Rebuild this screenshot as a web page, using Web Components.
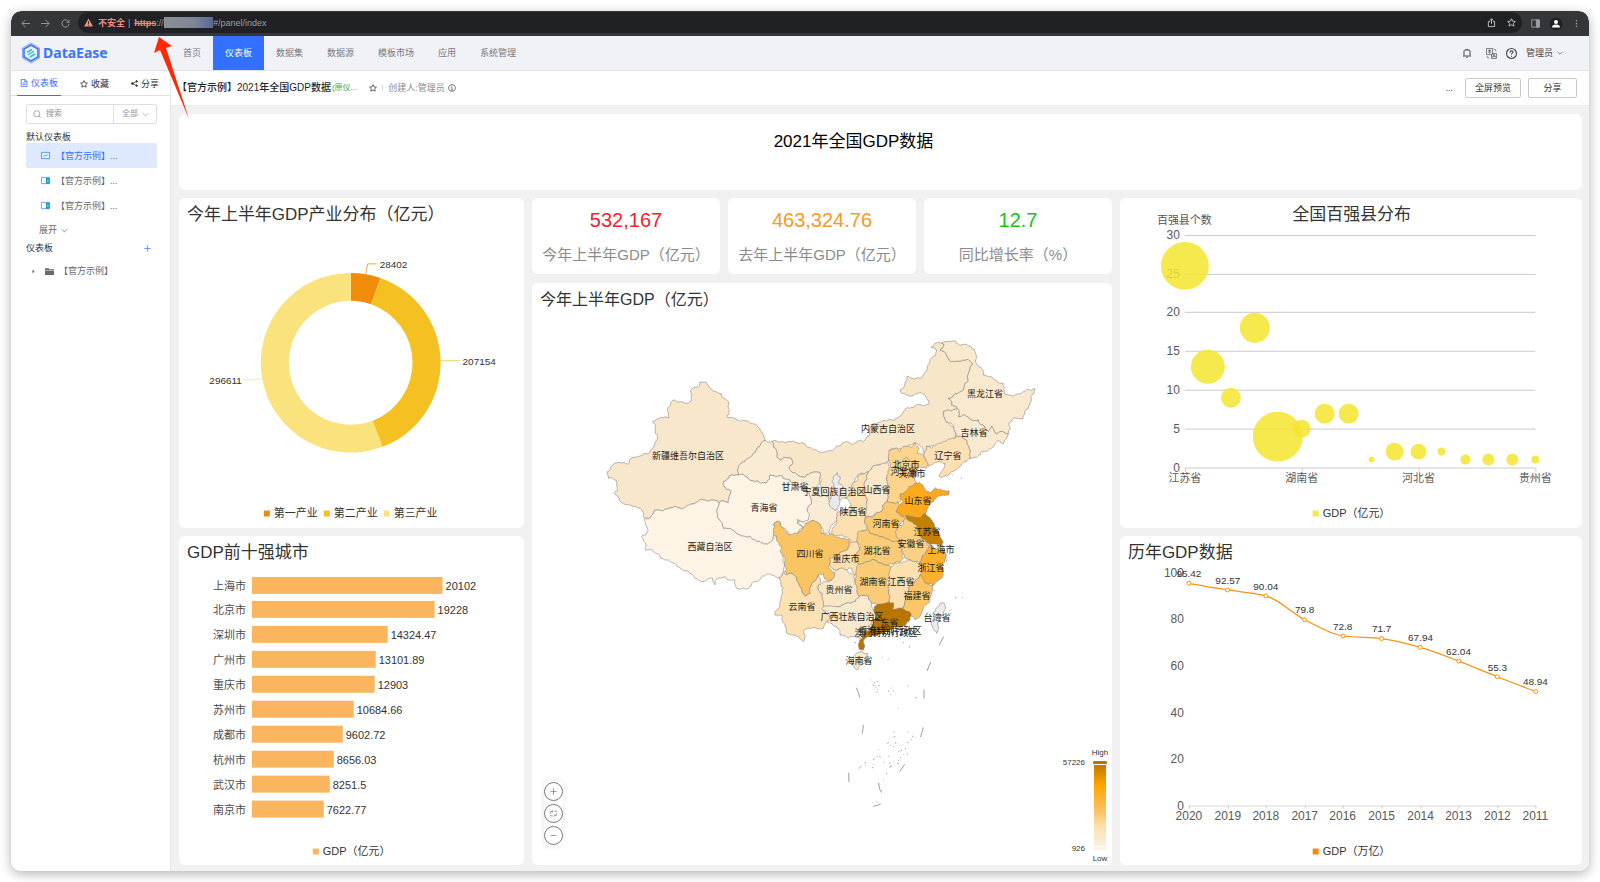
<!DOCTYPE html>
<html lang="zh-CN">
<head>
<meta charset="utf-8">
<title>DataEase</title>
<style>
  html, body { margin: 0; min-height: 100%; background: #fff; }
  body { font-family: "Liberation Sans", "Noto Sans CJK SC", sans-serif; font-size: 9px; line-height: 12px; color: #333; }
</style>
</head>
<body>
<de-window></de-window>

<script>
const SVG_TEXT = 'text{font-family:"Liberation Sans","Noto Sans CJK SC",sans-serif}';

class Base extends HTMLElement {
  connectedCallback() {
    if (this.shadowRoot) return;
    this.attachShadow({ mode: 'open' }).innerHTML =
      `<style>*{box-sizing:border-box} a{color:inherit;text-decoration:none} button,input,select{font:inherit;color:inherit;margin:0;padding:0;border:0;background:none;outline:0} svg{display:block;flex:none}${this.css()}</style>${this.html()}`;
  }
  css() { return ':host{display:block}'; }
  html() { return '<slot></slot>'; }
}
const R = Math.round;
/* vertically centred svg label */
const label = (x, y, s, size, anchor = 'start', fill = '#333') =>
  `<text x="${R(x)}" y="${R(y + size * 0.36)}" font-size="${size}" text-anchor="${anchor}" fill="${fill}">${s}</text>`;

const ICONS = {
  back: '<path d="M10 5H1M5 1L1 5l4 4"/>',
  forward: '<path d="M0 5h9M5 1l4 4-4 4"/>',
  reload: '<path d="M8.500 3A4 4 0 1 0 9 5.500M9 1v2.800H6.200"/>',
  share: '<path d="M3.500 4H1.500v5.500h7V4h-2M5 6.500V1M3 2.800L5 .8l2 2"/>',
  star: '<path d="M5 .8l1.300 2.800 3 .35-2.200 2.050.6 3L5 7.500 2.300 9l.6-3L.7 3.950l3-.35z"/>',
  panel: '<path d="M.8 1h8.400v8H.8z"/><path d="M6 1h3v8H6z" fill="currentColor"/>',
  more: '<path d="M5 1v1.400M5 4.300v1.400M5 7.600V9" stroke-width="1.500"/>',
  bell: '<path d="M2 7.500V3Q2 2 3 2h4q1 0 1 1v4.500M1 8h8M4.200 9.300h1.600M5 .8V2"/>',
  lang: '<g stroke-width=".6"><path d="M.5.5h5.500v5.500H.5zM1.700 2.200h3.200M1.700 3.800h3.200M3.300 1.500v3.500M5 6v3.500h4.500V5H6M5.800 8.600l1.500-3 1.500 3M6.300 7.600h2M7 .8q2 .2 2 2.200M.8 7.200q.2 2 2.200 2"/></g>',
  help: '<circle cx="5" cy="5" r="4.500"/><path d="M3.600 4Q3.600 2.600 5 2.600T6.400 3.900Q6.400 4.600 5 5.300v.7M5 7v1"/>',
  down: '<path d="M1 3l4 4 4-4"/>',
  doc: '<path d="M1.500.7h5L8.700 3v6.300H1.500zM6 .8v2.600h2.600M3.200 5h3.600M3.200 7h3.600"/>',
  nodes: '<circle cx="2" cy="5" r="1.400" fill="currentColor"/><circle cx="8" cy="2" r="1.200" fill="currentColor"/><circle cx="8" cy="8" r="1.200" fill="currentColor"/><path d="M8 2L2 5l6 3"/>',
  search: '<circle cx="4.700" cy="4.700" r="3.800"/><path d="M7.500 7.500L9.500 9.500"/>',
  info: '<circle cx="5" cy="5" r="4.300"/><path d="M5 4.300V7.500M4 4.500h1M4 7.500h2M5 2.300v1"/>',
  plus: '<path d="M5 .5v9M.5 5h9"/>',
  minus: '<path d="M1 5h8"/>',
  sync: '<path d="M1 5.500V2h3M9 4.500V8H6M6 1.500h3v1.500M4 8.500H1V7M3 .8L4.300 2 3 3.200M7 6.800L5.700 8 7 9.200"/>',
  caret: '<path d="M3 1l4 4-4 4z" fill="currentColor" stroke="none"/>',
  folder: '<path d="M0 1.500h4l1 1h5V4H0zM0 4.500h10V9H0z" fill="currentColor" stroke="none"/>',
  chart: '<path d="M.5 1.500h9v7h-9z" fill="#e8f1ff" stroke="#4f8ff7"/><path d="M2.300 6.500l2-2 1.500 1 2-2" stroke="#27c3c9"/>',
  board: '<path d="M.5 1.500h9v7h-9z" fill="#fff" stroke="#5aa2ee"/><path d="M5.500 2H9.500v6.500h-4z" fill="#1d8fe0" stroke="none"/><path d="M6.500 3.500h2v3.500h-2z" fill="#25e0c5" stroke="none"/>',
  warn: '<path d="M5 .5L10 9.500H0z" fill="currentColor" stroke="none"/><path d="M5 3.500v3M5 7.400v1" stroke="#202124"/>',
  user: '<circle cx="5" cy="5" r="6.500" fill="#202124" stroke="none"/><circle cx="5" cy="3" r="2" fill="#fff" stroke="none"/><path d="M1 8.500Q1 5.500 5 5.500T9 8.500z" fill="#fff" stroke="none"/>'
};
class Icon extends Base {
  css() { const s = this.getAttribute('size') || 8; return `:host{display:block;flex:none;width:${s}px;height:${s}px} svg{overflow:visible}`; }
  html() { return `<svg viewBox="0 0 10 10" width="100%" height="100%" fill="none" stroke="currentColor" stroke-width="1">${ICONS[this.getAttribute('name')]}</svg>`; }
}
customElements.define('de-icon', Icon);

class BrowserBar extends Base {
  css() { return `
    :host{display:flex;align-items:center;height:25px;background:#35363a;color:#9aa0a6;border-radius:10px 10px 0 0;padding:0 8px 0 10px}
    .nav{display:flex;gap:11px;width:57px;align-items:center}
    .url{flex:1;display:flex;align-items:center;height:21px;margin-bottom:2px;border-radius:10px;background:#202124;padding:0 6px}
    .danger{color:#f28b82} .b{font-weight:bold;margin:0 3px 0 5px}
    s{color:#f28b82;font-weight:bold;margin-left:4px}
    .mask{width:49px;height:11px;background:linear-gradient(90deg,#8d8f93,#7f8596 60%,#5b6794)}
    .end{margin-left:auto;display:flex;gap:11px;color:#c4c7cb}
    .tools{display:flex;gap:11px;align-items:center;margin-left:9px;color:#9aa0a6}`; }
  html() { return `
    <div class="nav"><de-icon name="back" size="9"></de-icon><de-icon name="forward" size="9"></de-icon><de-icon name="reload" size="9"></de-icon></div>
    <div class="url"><de-icon name="warn" size="9" class="danger"></de-icon><span class="danger b">不安全</span>|<s>https</s><span>://</span><span class="mask"></span><span>#/panel/index</span>
      <div class="end"><de-icon name="share" size="9"></de-icon><de-icon name="star" size="9"></de-icon></div></div>
    <div class="tools"><de-icon name="panel" size="9"></de-icon><de-icon name="user" size="10"></de-icon><de-icon name="more" size="9"></de-icon></div>`; }
}
customElements.define('de-browser-bar', BrowserBar);

class Header extends Base {
  css() { return `
    :host{display:flex;height:35px;background:#f1f2f7;border-bottom:1px solid #e2e3e8;color:#77797f}
    .logo{display:flex;align-items:center;gap:2px;width:160px;padding-left:10px;color:#3d73fb;font:bold 14px/20px "Noto Sans","Liberation Sans",sans-serif}
    nav{display:flex} nav a{display:flex;align-items:center;padding:0 12px}
    nav a.on{background:#3370ff;color:#fff}
    .right{margin-left:auto;display:flex;align-items:center;gap:9px;padding-right:21px;color:#45474c}
    .right de-icon:first-child{margin-right:5px}
    .right a{display:flex;align-items:center;gap:4px}`; }
  html() { return `
    <a class="logo" href="#"><svg width="20" height="22" viewBox="0 0 20 22" fill="none" stroke="#3d73fb"><path d="M10 1L18.500 6v10L10 21 1.500 16V6z" stroke-width="1" opacity=".6"/><path d="M10 3l7 4v8l-7 4-7-4V7z" stroke-width="1.600"/><path d="M6 10.500l5-3M7 13l6-4M9 15l5-3" stroke="#23c4e8" stroke-width="1.500"/></svg>DataEase</a>
    <nav>${['首页', '仪表板', '数据集', '数据源', '模板市场', '应用', '系统管理'].map((t, i) => `<a href="#"${i === 1 ? ' class="on"' : ''}>${t}</a>`).join('')}</nav>
    <div class="right"><de-icon name="bell" size="10"></de-icon><de-icon name="lang" size="11"></de-icon><de-icon name="help" size="11"></de-icon><a href="#">管理员<de-icon name="down" size="6"></de-icon></a></div>`; }
}
customElements.define('de-header', Header);

class Sidebar extends Base {
  css() { return `
    :host{display:block;width:160px;flex:none;background:#fff;border-right:1px solid #e6e6e6}
    .tabs{display:flex;height:25px;border-bottom:1px solid #dfe1e6;padding:0 8px 0 6px;justify-content:space-between}
    .tabs button{display:flex;align-items:center;gap:3px;padding:0 3px;height:25px}
    .tabs .on{color:#3370ff;border-bottom:1px solid #3370ff}
    .body{padding:8px 13px 0 15px}
    .find{display:flex;height:20px;border:1px solid #dcdfe6;border-radius:2px;color:#8f9399;font-size:8px;align-items:center}
    .find de-icon{margin-left:6px} .find input{flex:1;min-width:0;margin-left:5px}.find input::placeholder{color:#8f9399}
    .pick{display:flex;align-items:center;border-left:1px solid #dcdfe6;height:18px;width:43px}
    .pick select{appearance:none;width:22px;margin-left:8px} .pick de-icon{margin:0 0 0 -2px}
    h3{margin:0;font-size:9px;font-weight:normal;line-height:12px;color:#333;display:flex;justify-content:space-between;align-items:center}
    h3.first{margin-top:7px} h3 button{color:#3370ff;padding-right:6px}
    .item{display:flex;align-items:center;height:25px;padding-left:15px;gap:6px;border-radius:2px;color:#66686d}
    .item.on{background:#dfe9fd;color:#3370ff}
    .more{display:flex;align-items:center;gap:4px;padding-left:13px;height:24px;color:#66686d}
    .tree{display:flex;align-items:center;gap:9px;padding-left:5px;margin-top:11px;color:#66686d}.tree a{margin-left:-4px}`; }
  html() { return `
    <div class="tabs"><button class="on"><de-icon name="doc"></de-icon>仪表板</button><button><de-icon name="star"></de-icon>收藏</button><button><de-icon name="nodes" size="7"></de-icon>分享</button></div>
    <div class="body">
      <div class="find"><de-icon name="search" size="8"></de-icon><input placeholder="搜索" aria-label="搜索"><div class="pick"><select aria-label="类型"><option>全部</option></select><de-icon name="down" size="7"></de-icon></div></div>
      <h3 class="first">默认仪表板</h3>
      <a class="item on" href="#"><de-icon name="chart" size="9"></de-icon>【官方示例】...</a>
      <a class="item" href="#"><de-icon name="board" size="9"></de-icon>【官方示例】...</a>
      <a class="item" href="#"><de-icon name="board" size="9"></de-icon>【官方示例】...</a>
      <a class="more" href="#">展开<de-icon name="down" size="7"></de-icon></a>
      <h3>仪表板<button aria-label="新建"><de-icon name="plus" size="7"></de-icon></button></h3>
      <div class="tree"><de-icon name="caret" size="5"></de-icon><de-icon name="folder" size="9"></de-icon><a href="#">【官方示例】</a></div>
    </div>`; }
}
customElements.define('de-sidebar', Sidebar);

class Toolbar extends Base {
  css() { return `
    :host{display:flex;align-items:center;height:35px;background:#fff;padding:0 12px 0 6px;border-bottom:1px solid #ececec;color:#8a8c91}
    h1{margin:0;font-size:10px;line-height:14px;font-weight:500;color:#1f2329}
    .g{color:#4ca24c;font-size:8px;margin:0 12px 0 1px} .st{color:#444}
    i{width:1px;height:8px;background:#ddd;margin:0 5px}
    .info{margin-left:3px;color:#555}
    .r{margin-left:auto;display:flex;align-items:center;gap:7px;color:#333}
    .r button{height:20px;border:1px solid #c8cacf;border-radius:2px;padding:0 9px;min-width:49px}
    .r .dots{border:0;min-width:0;padding:0 5px}`; }
  html() { return `<h1>【官方示例】2021年全国GDP数据</h1><span class="g">(原仪...</span><de-icon class="st" name="star"></de-icon><i></i><span>创建人:管理员</span><de-icon class="info" name="info"></de-icon>
    <div class="r"><button class="dots" aria-label="更多">...</button><button>全屏预览</button><button>分享</button></div>`; }
}
customElements.define('de-toolbar', Toolbar);

class Card extends Base {
  css() { return `:host{display:block;background:#fff;border-radius:6px;min-width:0;min-height:0;overflow:hidden}`; }
}
customElements.define('de-card', Card);

class Kpi extends Base {
  css() { return `:host{display:flex;flex-direction:column;align-items:center;height:76px;padding-top:10px;gap:12px;background:#fff;border-radius:6px;white-space:nowrap}
    b{font-weight:normal;font-size:20px;line-height:24px;color:${this.getAttribute('color')}} span{font-size:15px;line-height:22px;color:#8b8b8b}`; }
  html() { return `<b>${this.getAttribute('value')}</b><span><slot></slot></span>`; }
}
customElements.define('de-kpi', Kpi);

/* shared frame for every svg chart */
class Chart extends Base {
  size = [344, 330];
  css() { return `:host{display:block;height:100%;position:relative} svg{width:100%;height:100%} ${SVG_TEXT}`; }
  html() { return `<svg viewBox="0 0 ${this.size.join(' ')}" preserveAspectRatio="xMinYMid meet">${this.draw()}</svg>`; }
  title(s) { return label(8, 16, s, 17); }
  legend(x, color, s) { return `<rect x="${x}" y="313" width="6" height="6" fill="${color}"/>` + label(x + 10, 316, s, 11); }
}

class Donut extends Chart {
  draw() {
    const data = [[28402, '#f18b0a', '第一产业'], [207154, '#f5c022', '第二产业'], [296611, '#fae27c', '第三产业']];
    const sum = data.reduce((a, d) => a + d[0], 0), cx = 172, cy = 165, ro = 90, ri = 62;
    const p = (r, a) => `${(cx + r * Math.sin(a)).toFixed(1)} ${(cy - r * Math.cos(a)).toFixed(1)}`;
    let a = 0, out = this.title('今年上半年GDP产业分布（亿元）');
    data.forEach(([v, c, n], i) => {
      const b = a + v / sum * Math.PI * 2, big = b - a > Math.PI ? 1 : 0;
      out += `<path d="M${p(ro, a)}A${ro} ${ro} 0 ${big} 1 ${p(ro, b)}L${p(ri, b)}A${ri} ${ri} 0 ${big} 0 ${p(ri, a)}z" fill="${c}"/>` + this.legend(85 + i * 60, c, n);
      a = b;
    });
    return out + '<g fill="none"><path d="M187 76l2-10h9" stroke="#f5a742"/><path d="M262 163h19" stroke="#f5cd55"/><path d="M82 181l-6 1H65" stroke="#fae79a"/></g>'
      + label(201, 66, '28402', 10) + label(284, 163, '207154', 10) + label(63, 182, '296611', 10, 'end');
  }
}
customElements.define('de-donut', Donut);

class Bars extends Chart {
  draw() {
    const d = [['上海市', 20102], ['北京市', 19228], ['深圳市', 14324.47], ['广州市', 13101.89], ['重庆市', 12903], ['苏州市', 10684.66], ['成都市', 9602.72], ['杭州市', 8656.03], ['武汉市', 8251.5], ['南京市', 7622.77]];
    return this.title('GDP前十强城市') + d.map(([n, v], i) => {
      const y = R(40.5 + i * 24.9), w = R(v / 20102 * 191);
      return label(67, y + 9, n, 11, 'end', '#4a4a4a') + `<rect x="73" y="${y}" width="${w}" height="17" fill="#fab55e"/>` + label(76 + w, y + 9, v, 11);
    }).join('') + this.legend(134, '#fab55e', 'GDP（亿元）');
  }
}
customElements.define('de-bars', Bars);

class Bubbles extends Chart {
  size = [462, 330];
  draw() {
    const Y = v => R(270 - v * 7.777), X = i => R(64.5 + i * 23.44);
    const b = [[26, 24], [13, 17], [9, 10], [18, 15], [4, 25], [5, 9], [7, 10], [7, 10], [1, 3], [2, 9], [2, 8], [2, 4], [1, 5], [1, 6], [1, 6], [1, 4]];
    let out = label(232, 16, '全国百强县分布', 17, 'middle') + label(37, 22, '百强县个数', 11, 'start', '#555');
    for (let v = 0; v <= 30; v += 5) out += `<path d="M65 ${Y(v)}.5H416" stroke="#cbcbcb"/>` + label(60, Y(v), v, 12, 'end', '#595959');
    ['江苏省', '湖南省', '河北省', '贵州省'].forEach((n, i) => out += `<path d="M${X(i * 5)}.5 270v4" stroke="#ccc"/>` + label(X(i * 5), 280, n, 11, 'middle', '#595959'));
    return out + b.map(([v, r], i) => `<circle cx="${X(i)}" cy="${Y(v)}" r="${r}" fill="#f4e52e" opacity=".85"/>`).join('') + this.legend(193, '#f6e94f', 'GDP（亿元）');
  }
}
customElements.define('de-bubbles', Bubbles);

class Line extends Chart {
  size = [462, 330];
  draw() {
    const v = [95.42, 92.57, 90.04, 79.8, 72.8, 71.7, 67.94, 62.04, 55.3, 48.94], st = 38.6;
    const P = v.map((n, i) => [69 + i * st, 270 - n * 2.333]), n = P.length;
    /* monotone cubic tangents */
    const s = P.slice(1).map((p, i) => (p[1] - P[i][1]) / st);
    const t = P.map((_, i) => i === 0 ? s[0] : i === n - 1 ? s[n - 2] : 2 * s[i - 1] * s[i] / (s[i - 1] + s[i]));
    let d = `M${P[0]}`;
    for (let i = 1; i < n; i++) d += `C${P[i - 1][0] + st / 3} ${P[i - 1][1] + t[i - 1] * st / 3} ${P[i][0] - st / 3} ${P[i][1] - t[i] * st / 3} ${P[i]}`;
    let out = this.title('历年GDP数据') + '<path d="M69 270.500H417" stroke="#d9d9d9"/>';
    for (let k = 0; k <= 100; k += 20) out += label(64, 269.5 - k * 2.333, k, 12, 'end', '#595959');
    out += `<path d="${d}" fill="none" stroke="#f6930f" stroke-width="1.200"/>`;
    P.forEach((p, i) => out += `<path d="M${R(p[0])}.5 270v3" stroke="#ccc"/><circle cx="${p[0]}" cy="${p[1]}" r="2" fill="#fff" stroke="#f6930f"/>` + label(p[0], p[1] - 10, v[i], 10, 'middle') + label(p[0], 280, 2020 - i, 12, 'middle', '#595959'));
    return out + this.legend(193, '#f18b0a', 'GDP（万亿）');
  }
}
customElements.define('de-line', Line);

/* Province outlines: [fill, x offset, points] */
const REGIONS = [
  ['#f7e6c8', 0, '547,364 570,366 620,368 650,380 680,390 710,394 740,378 790,372 820,365 840,345 850,310 890,303 930,288 948,265 990,255 1018,252 1010,235 980,220 935,220 930,210 952,168 990,175 1008,155 1012,140 1038,105 1040,90 1023,82 1035,70 1062,75 1050,90 1070,105 1082,125 1115,122 1130,118 1148,130 1140,150 1135,180 1120,210 1075,235 1085,255 1102,265 1060,275 1068,305 1090,320 1098,350 1050,380 1010,378 1002,400 980,370 940,385 905,385 895,425 860,435 835,455 810,460 790,495 785,528 750,540 725,535 700,530 690,490 690,458 660,460 645,472 620,462 597,445 608,430 605,416 570,420 560,395'],
  ['#f8e7cb', 0, '330,185 348,186 355,200 375,215 395,222 410,240 416,265 412,293 440,300 465,302 490,312 508,325 527,362 510,378 490,400 470,418 455,428 445,465 400,485 420,510 415,548 388,548 360,541 320,547 300,556 275,568 240,563 220,572 195,570 180,594 163,594 150,565 120,555 105,553 88,535 72,520 82,512 76,480 55,475 52,455 65,438 90,428 115,432 122,415 150,408 190,382 203,350 195,330 197,315 187,305 215,292 238,293 235,285 250,240 270,245 302,243 305,208 325,200'],
  ['#faecd4', 0, '527,362 547,364 560,395 570,420 605,416 608,430 597,445 620,462 645,472 660,460 690,458 688,480 675,505 690,530 715,530 722,560 745,572 742,600 730,610 720,642 700,640 690,615 665,602 650,615 625,600 620,610 645,625 630,640 615,645 600,640 652,575 665,545 650,510 625,500 600,480 575,468 540,465 530,488 500,483 470,470 445,465 455,428 470,418 490,400 510,378'],
  ['#fdf4e5', 0, '163,597 180,594 195,570 220,572 240,563 275,568 320,547 360,541 388,548 385,560 388,600 400,625 440,640 480,648 510,665 540,668 552,645 565,655 578,685 583,740 568,775 545,765 515,770 490,785 475,805 440,805 435,780 405,770 378,778 375,795 368,775 315,775 300,760 260,738 235,720 212,715 190,695 165,688 155,650 168,645 172,625'],
  ['#fdf4e5', 0, '400,485 445,465 470,470 500,483 530,488 540,465 575,468 600,480 625,500 650,510 665,545 652,575 655,600 640,605 622,598 622,610 645,625 630,628 615,645 598,645 575,620 562,604 550,612 552,645 540,668 510,665 480,648 440,640 400,625 388,600 385,560 388,548 415,548 420,510'],
  ['#f8e9cf', 690, '360,90 372,75 365,70 405,63 430,73 450,78 468,105 478,140 490,165 520,175 550,190 555,222 580,228 610,215 625,208 645,206 632,230 628,255 608,298 575,300 567,310 565,342 540,335 530,342 515,318 505,335 495,320 475,300 455,300 435,285 415,290 412,265 395,255 385,235 430,210 445,180 450,150 458,130 440,118 425,122 392,125 380,105'],
  ['#f9e9cf', 690, '370,275 412,265 415,290 435,285 455,300 475,300 495,320 505,335 515,318 530,342 540,335 565,342 560,355 550,372 535,362 520,380 500,395 485,395 475,408 450,415 448,385 440,360 408,350 402,320 378,305'],
  ['#fde0b4', 690, '320,378 335,385 355,370 380,362 408,350 440,360 448,385 450,415 425,432 395,455 362,472 358,465 375,430 358,425 340,432 325,440 318,420 312,400'],
  ['#fee2b4', 0, '568,775 583,755 590,765 605,760 630,800 645,828 660,820 665,790 685,765 690,790 680,800 690,815 700,850 700,870 720,900 700,925 660,925 640,935 640,965 625,950 610,945 590,940 585,915 575,885 555,885 570,850 578,820 572,790'],
  ['#fee0b0', 690, '95,495 120,462 145,455 140,480 132,510 140,550 135,592 142,625 125,632 115,660 95,668 85,655 60,645 35,640 45,615 50,580 80,570 95,555 75,535 95,528'],
  ['#fde0b0', 690, '85,668 112,665 122,690 105,705 110,765 95,745 60,745 40,750 30,740 25,715 50,705 80,690'],
  ['#fac463', 0, '562,604 570,605 580,625 600,645 625,640 635,630 650,610 665,602 690,615 695,640 730,645 760,655 778,660 770,690 740,705 718,715 715,740 735,760 735,775 710,780 700,760 685,765 665,790 660,820 645,828 630,800 605,760 590,765 585,720 575,680 560,648 550,645 552,610'],
  ['#f9e6c4', 690, '-5,795 10,785 40,775 45,755 70,745 85,758 105,765 112,800 118,830 90,850 50,860 25,870 10,855 8,820 -5,810'],
  ['#f9e9cf', 690, '5,865 50,860 90,850 118,830 145,828 155,850 165,880 155,915 130,935 120,955 85,955 60,945 50,920 20,905 30,890'],
  ['#fbe8c8', 690, '145,455 170,435 205,430 208,440 200,480 205,520 200,545 185,575 155,590 135,588 140,550 132,510 140,480'],
  ['#fdd48c', 690, '207,390 225,385 240,395 255,378 275,382 285,368 295,380 292,400 310,405 325,435 318,445 300,440 290,460 282,475 290,488 270,500 250,530 235,548 202,545 205,520 200,480 205,460 210,430 205,410'],
  ['#fcd99b', 690, '245,425 260,412 277,425 275,445 255,450 240,440'],
  ['#fbe3bb', 690, '278,440 290,450 285,475 270,465'],
  ['#fbca70', 690, '200,545 235,548 238,555 228,575 245,588 258,600 245,605 232,625 230,640 245,665 215,665 180,650 150,640 142,625 135,592 160,590 185,575'],
  ['#fcd083', 690, '257,595 275,605 290,615 300,645 310,660 328,678 315,700 300,728 275,722 255,715 245,690 240,660 228,650 232,625 250,612'],
  ['#ffaa1c', 690, '240,522 268,500 285,490 308,495 315,510 330,518 345,503 365,510 387,512 385,525 355,528 340,545 325,560 318,578 305,590 285,592 265,588 245,588 228,575 235,560 250,545'],
  ['#c68000', 690, '257,588 285,592 305,590 316,580 335,600 345,625 360,645 370,665 365,678 345,672 330,675 315,660 300,645 290,615 275,605'],
  ['#f7e3c0', 690, '350,674 368,676 375,690 355,692'],
  ['#ffb02e', 690, '322,690 330,676 345,688 370,692 378,710 370,730 368,760 350,785 340,795 315,788 302,765 298,740 305,715'],
  ['#fbcb75', 690, '115,635 142,628 150,640 180,650 215,665 240,665 248,700 250,715 225,728 205,735 170,722 140,725 118,735 108,725 120,690 112,665'],
  ['#fbcb78', 690, '110,740 140,725 170,722 205,735 210,765 205,800 208,845 190,855 165,850 155,850 145,828 118,830 112,800'],
  ['#fde0b0', 690, '210,745 225,728 250,725 275,722 300,735 300,765 275,790 265,820 245,865 215,870 208,845 205,800'],
  ['#fbc768', 690, '300,765 315,788 338,795 330,840 310,865 285,900 268,885 245,865 265,820 275,790'],
  ['#b87500', 690, '165,858 195,850 220,848 218,868 245,865 268,875 270,900 255,918 215,925 180,940 150,950 130,965 130,990 118,988 118,960 130,940 155,918 168,885'],
  ['#f9e9cf', 690, '105,1005 125,993 143,1000 138,1025 115,1048 97,1035'],
  ['#ececec', 690, '360,850 373,850 370,880 350,940 335,915 338,880'],
  ['#ebebee', 690, '40,470 52,458 60,470 55,490 70,500 58,530 55,560 45,572 28,555 30,520 42,505 36,485']
];
const NAMES = [['新疆维吾尔自治区', 294, 408], ['甘肃省', 616, 499], ['青海省', 521, 562], ['西藏自治区', 361, 679], ['四川省', 659, 702], ['云南省', 635, 860], ['宁夏回族自治区', 733, 516], ['陕西省', 789, 576], ['重庆市', 768, 717], ['贵州省', 748, 808], ['广西壮族自治区', 785, 891], ['内蒙古自治区', 895, 327], ['黑龙江省', 1185, 222], ['吉林省', 1151, 338], ['辽宁省', 1075, 406], ['北京市', 947, 435], ['河北省', 942, 454], ['天津市', 967, 461], ['山西省', 862, 508], ['山东省', 984, 542], ['河南省', 888, 612], ['江苏省', 1011, 636], ['安徽省', 962, 670], ['上海市', 1052, 689], ['湖北省', 860, 692], ['浙江省', 1024, 743], ['湖南省', 848, 785], ['江西省', 932, 785], ['福建省', 980, 828], ['广东省', 885, 908], ['香港特别行政区', 900, 932], ['澳门特别行政区', 889, 938], ['台湾省', 1042, 893], ['海南省', 808, 1021]];
/* adds small wiggles to an edge; the same edge always gets the same wiggle */
function rough(a, b, depth) {
  const dx = b[0] - a[0], dy = b[1] - a[1], len = Math.hypot(dx, dy);
  if (depth === 0 || len < 7) return [b];
  const h = Math.sin((a[0] + b[0]) * 12.9898 + (a[1] + b[1]) * 78.233) * 43758.5453;
  const k = ((h - Math.floor(h)) - 0.5) * 0.4 * (a[0] < b[0] || (a[0] === b[0] && a[1] < b[1]) ? 1 : -1);
  const m = [(a[0] + b[0]) / 2 - dy * k, (a[1] + b[1]) / 2 + dx * k];
  return [...rough(a, m, depth - 1), ...rough(m, b, depth - 1)];
}
class ChinaMap extends Chart {
  size = [580, 582];
  css() { return super.css() + `
    .zoom{position:absolute;left:12px;bottom:19px;display:grid;gap:3px;background:#fff;border-radius:3px;box-shadow:0 0 5px rgba(0,0,0,.1);padding:1px 0}
    .zoom button{width:19px;height:19px;border:1px solid #777;border-radius:50%;display:grid;place-items:center;color:#777}`; }
  html() { return super.html() + `<div class="zoom"><button aria-label="放大"><de-icon name="plus" size="7"></de-icon></button><button aria-label="还原"><de-icon name="sync" size="7"></de-icon></button><button aria-label="缩小"><de-icon name="minus" size="7"></de-icon></button></div>`; }
  draw() {
    const shapes = REGIONS.map(([c, off, pts]) => {
      const p = pts.split(' ').map(s => s.split(',').map(Number)).map(([x, y]) => [x + off, y]);
      const out = p.flatMap((q, i) => rough(q, p[(i + 1) % p.length], 3));
      return `<path d="M${out.map(q => q.map(n => n.toFixed(1))).join('L')}z" fill="${c}"/>`;
    }).join('');
    const dots = '843,1079 852,1090 860,1084 847,1098 856,1101 865,1098 862,1108 859,1117 850,1095 904,1105 908,1112 894,1114 901,1122 953,1099 975,1132 925,1166 910,1235 912,1251 908,1253 952,1236 966,1248 974,1254 962,1258 892,1270 900,1275 910,1280 915,1268 935,1276 945,1285 932,1292 940,1302 925,1295 952,1266 865,1290 860,1308 850,1318 848,1332 846,1344 868,1308 880,1328 895,1308 897,1330 902,1340 925,1322 922,1330 908,1330 930,1312 950,1303 805,1346 812,1340 823,1328 825,1338 808,1342 888,1362 880,1378 865,1392 872,1415 875,1413 860,1445 794,969 876,1012 893,1020 938,967 956,978 957,980 1095,834 1117,832 1081,871 1080,880 1075,465 1085,463 1112,475 1068,716 1068,723 1030,810'
      .split(' ').map((s, i) => { const [x, y] = s.split(','); return `M${x} ${y}l${i % 3 + 2} ${i % 2 ? -2 : 2}`; }).join('');
    const dashes = 'M799 1103q8 14 10 29M820 1215q0 13-4 26M1002 1108v28M1000 1222q-3 15-9 29M944 1333l-15 22M776 1359l1 28M1022 1026l-11 27M1061 950l-13 25M850 1459l22-6M866 1390l2 14 4 10M898 1342l8-6';
    return `<defs><linearGradient id="g" x2="0" y2="1"><stop stop-color="#c07a00"/><stop offset=".25" stop-color="#ffa500"/><stop offset=".6" stop-color="#fbc46b"/><stop offset=".75" stop-color="#fde0ad"/><stop offset="1" stop-color="#faf0de"/></linearGradient></defs>`
      + label(8, 16, '今年上半年GDP（亿元）', 16)
      + `<g transform="translate(58 37) scale(.333333)" stroke="#85827d" stroke-width="1.700" stroke-linejoin="round">${shapes}<path fill="none" stroke="#8a8a8a" stroke-width="2.500" d="${dots}${dashes}"/></g>`
      + NAMES.map(([n, x, y]) => label(58 + x / 3, 37 + y / 3, n, 9, 'middle', '#1a1a1a')).join('')
      + '<rect x="562" y="482" width="12" height="81" fill="url(#g)"/><rect x="561" y="478" width="14" height="3" rx="1" fill="#b87500"/><rect x="561" y="564" width="14" height="3" rx="1" fill="#fdf4e5"/>'
      + label(568, 469, 'High', 8, 'middle') + label(568, 575, 'Low', 8, 'middle') + label(553, 479, '57226', 8, 'end') + label(553, 565, '926', 8, 'end');
  }
}
customElements.define('de-map', ChinaMap);

class Dashboard extends Base {
  css() { return `
    :host{flex:1;min-height:0;display:grid;grid-template-rows:76px minmax(0,1fr);gap:8px;padding:8px 7px 6px 8px;background:#f1f1f1}
    h2{margin:0;padding:16px 54px 0 0;text-align:center;font-size:17px;line-height:24px;font-weight:normal;color:#000}
    .cols{display:grid;grid-template-columns:345fr 580fr 462fr;gap:8px;min-height:0}
    .side{display:grid;grid-template-rows:minmax(0,1fr) minmax(0,1fr);gap:8px;min-height:0}
    .mid{display:grid;grid-template-rows:76px minmax(0,1fr);gap:9px;min-height:0}
    .kpis{display:grid;grid-template-columns:1fr 1fr 1fr;gap:8px}`; }
  html() { return `
    <de-card><h2>2021年全国GDP数据</h2></de-card>
    <div class="cols">
      <div class="side"><de-card><de-donut></de-donut></de-card><de-card><de-bars></de-bars></de-card></div>
      <div class="mid"><div class="kpis">
        <de-kpi value="532,167" color="#f5222d">今年上半年GDP（亿元）</de-kpi>
        <de-kpi value="463,324.76" color="#fa9a1e">去年上半年GDP（亿元）</de-kpi>
        <de-kpi value="12.7" color="#19c40f">同比增长率（%）</de-kpi></div>
        <de-card><de-map></de-map></de-card></div>
      <div class="side"><de-card><de-bubbles></de-bubbles></de-card><de-card><de-line></de-line></de-card></div>
    </div>`; }
}
customElements.define('de-dashboard', Dashboard);

class AppWindow extends Base {
  css() { return `
    :host{display:block;padding:11px;position:relative}
    .win{display:flex;flex-direction:column;height:calc(100vh - 22px);min-height:640px;border-radius:10px;box-shadow:0 3px 12px rgba(0,0,0,.3);overflow:hidden;background:#fff}
    .row{flex:1;display:flex;min-height:0}
    main{flex:1;min-width:0;display:flex;flex-direction:column}
    .arrow{position:absolute;left:153px;top:36px;pointer-events:none}`; }
  html() { return `
    <div class="win"><de-browser-bar></de-browser-bar><de-header></de-header>
      <div class="row"><de-sidebar></de-sidebar><main><de-toolbar></de-toolbar><de-dashboard></de-dashboard></main></div></div>
    <svg class="arrow" width="38" height="86" viewBox="0 0 38 86"><path d="M6 1L19 10l-6 2 23 71L7 14l-6 3z" fill="#ff2a05"/></svg>`; }
}
customElements.define('de-window', AppWindow);
</script>
</body>
</html>
